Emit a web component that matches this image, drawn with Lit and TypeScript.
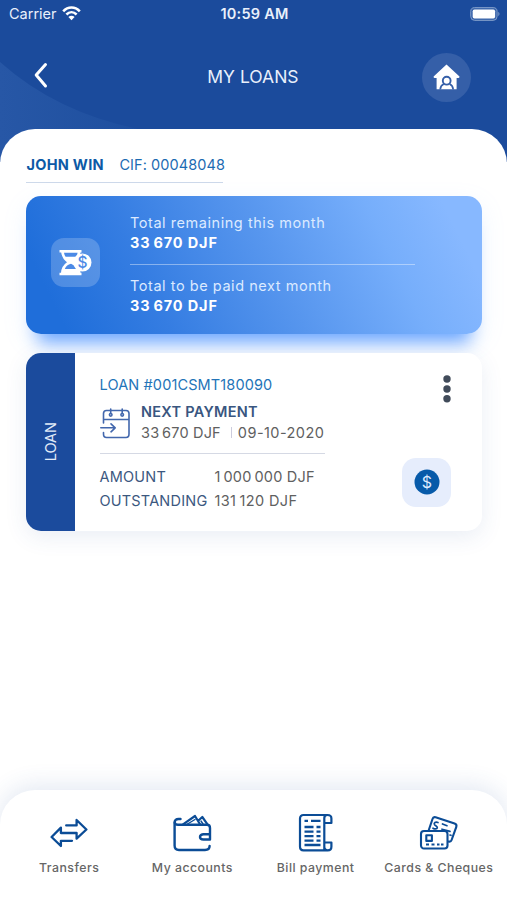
import { LitElement, html, css, svg } from "lit";
import { customElement } from "lit/decorators.js";

const transfersIcon = svg`<svg width="38" height="30" viewBox="0 0 38 30" fill="none" stroke="#0b4c96" stroke-width="2.3" stroke-linecap="round" stroke-linejoin="round">
  <path d="M16.2 7.4H26.6V2L36.4 11.5L26.6 20.6V15H10.9V9.6L1.6 19L10.9 28V22.8H22"/></svg>`;

const walletIcon = svg`<svg width="40" height="40" viewBox="0 0 40 40" fill="none" stroke="#0b4c96" stroke-width="2.4" stroke-linecap="round" stroke-linejoin="round">
  <path d="M8.5 6H6.5C4 6 2.6 7.2 2.6 9.2V32.5C2.6 35.5 4 37 7 37H33C36.3 37 37.6 35.8 37.6 33"/>
  <path d="M2.8 9.5C2.8 11 4 11.8 6 11.8H35C36.8 11.8 38 13 38 15V26.5H31.5C29.5 26.5 28 25.4 28 24C28 22.5 29.5 21.2 31.5 21.2H38"/>
  <path stroke-width="2.2" d="M11 11.3L23 3L28 11.3M26.5 7.5L30.3 4L35.5 11.3"/>
  <path stroke-width="1.4" d="M15.5 11L23 6.5M29 8L31 11"/></svg>`;

const billIcon = svg`<svg width="36" height="40" viewBox="0 0 36 40" fill="none" stroke="#0b4c96" stroke-width="2.2" stroke-linecap="round" stroke-linejoin="round">
  <path d="M29.5 2H5.5C3.2 2 2 3.3 2 5.5V33.5C2 36 3.2 37.4 5.5 37.4H30M26.3 37V5C26.3 3 27.5 2 29.5 2C32 2 33.4 3.2 33.4 5.5V10H26.5M26.5 29.5H33.4V33.8C33.4 36.2 32.2 37.4 29.8 37.4C27.5 37.4 26.3 36 26.3 33.5"/>
  <path stroke-linecap="butt" stroke-width="2.3" d="M6.5 7.8H10M13 7.8H22.5M6.5 14H15.5M18.5 14H22.5M6.5 18.6H15.5M18.5 18.6H22.5M6.5 23.2H15.5M18.5 23.2H22.5M6.5 27.6H15.5M18.5 27.6H22.5M6.5 32H22.5"/></svg>`;

const cardsIcon = svg`<svg width="40" height="36" viewBox="0 0 40 36" fill="none" stroke="#0b4c96" stroke-width="2.1" stroke-linecap="round" stroke-linejoin="round">
  <path d="M9.8 15L13.5 4C14 2.4 15 1.8 16.6 2.3L35.6 8.6C37.2 9.2 37.8 10.3 37.3 11.8L32.6 25C32.1 26.5 31 27 29.4 26.5"/>
  <rect x="2" y="16" width="26.5" height="17.5" rx="3"/>
  <rect x="7.3" y="20.3" width="5.6" height="5.6"/>
  <path stroke-width="1.7" d="M19 7.5C16.5 6.5 14.5 8 15.5 9.6C16.3 10.8 18.6 11 18.3 12.8C18 14.3 15.6 14.2 14 13.2M23.5 9L28 10.7M23 14.2L31 16.4M31 20L32 20.3"/>
  <path d="M7 29.5H10M12.5 29.5H15.5M18 29.5H20.5M22 29.5H24.5" stroke-linecap="butt"/></svg>`;

@customElement("app-root")
export class AppRoot extends LitElement {
  static styles = css`
    :host {
      display: flex;
      flex-direction: column;
      width: 507px;
      height: 900px;
      overflow: hidden;
      background: linear-gradient(#1b4b9c 0 162px, #fff 162px);
      font-family: Inter, "Liberation Sans", sans-serif;
      font-size: 14.5px;
      white-space: nowrap;
    }
    * { box-sizing: border-box; }
    svg { display: block; flex: none; }
    .top { position: relative; height: 129px; flex: none; color: #e9f0fb; }
    .swoosh { position: absolute; left: 0; top: 0; }
    .status { position: relative; display: grid; grid-template-columns: 1fr auto 1fr; align-items: center; height: 27px; padding: 0 7px 0 9px; font-size: 14.5px; }
    .carrier { display: flex; align-items: center; gap: 5px; }
    .carrier svg { margin-top: -1px; }
    .clock { font-weight: 600; letter-spacing: 0.22px; }
    .status .battery { justify-self: end; }
    .bar { position: relative; display: grid; grid-template-columns: 1fr auto 1fr; align-items: center; height: 99px; padding: 0 36.5px 0 33px; }
    .bar > svg { margin-top: -1px; }
    .title { font-size: 17.5px; transform: translateX(1.2px); }
    .home { justify-self: end; display: grid; place-items: center; width: 49px; height: 49px; margin-top: 1px; border-radius: 50%; background: #355fa8; }
    .panel { flex: 1; position: relative; background: #fff; border-radius: 35px 35px 0 0; padding: 24px 25px 0 26px; }
    .owner { display: flex; gap: 15.5px; width: 197px; height: 30px; padding: 3px 0 0 0.5px; line-height: 18px; border-bottom: 1px solid #cdd9ea; color: #1c6bb2; }
    .name { font-weight: 700; color: #0d5aa6; letter-spacing: 0.28px; }
    .cif { letter-spacing: 0.08px; }
    .summary { display: flex; margin-top: 12.5px; height: 138px; border-radius: 15px; background: linear-gradient(64deg, #1f6eda 8%, #357de2 28%, #5796ee 54%, #76aefb 77%, #87b8ff 92%); box-shadow: 0 20px 18px -12px #69a5ff, 0 8px 24px rgba(130, 180, 255, 0.13); color: #dceaff; }
    .tile { display: grid; place-items: center; width: 49px; height: 49px; margin: 42.5px 30.5px 0 24.5px; border-radius: 13px; background: rgba(255, 255, 255, 0.2); }
    .totals { width: 285px; padding-top: 17px; letter-spacing: 0.55px; line-height: 20.7px; }
    .totals b { display: block; color: #fff; font-weight: 700; letter-spacing: 0.85px; }
    .totals hr { margin: 9.8px 0 11px; border: 0; height: 1px; background: rgba(255, 255, 255, 0.4); }
    .loan { position: relative; display: flex; height: 178.5px; margin-top: 19px; border-radius: 15px; background: #fff; box-shadow: 0 6px 22px rgba(50, 90, 160, 0.1); }
    .tab { display: grid; place-items: center; width: 49px; border-radius: 15px 0 0 15px; background: #1b4b9d; color: #e2ebf8; }
    .tab span { writing-mode: vertical-rl; transform: rotate(180deg); }
    .info { width: 225.5px; margin-left: 24.5px; padding-top: 21.5px; color: #606060; line-height: 21px; }
    .number { color: #2374b8; letter-spacing: 0.13px; }
    .next { display: flex; height: 53px; margin-top: 6px; border-bottom: 1px solid #d5d9e4; }
    .next svg { margin-top: 7px; }
    .next div { margin-left: 10.5px; }
    .next b { display: block; font-weight: 600; color: #395680; letter-spacing: 0.28px; }
    .due { display: flex; align-items: center; }
    .paid { letter-spacing: 0.18px; }
    .date { letter-spacing: 0.45px; }
    .due i { width: 1px; height: 11px; margin: 0 6px 0 10px; background: #ccd; }
    .amounts { display: grid; grid-template-columns: 115px auto; row-gap: 3.5px; margin-top: 12.5px; line-height: 20.5px; letter-spacing: 0.2px; }
    .amounts .k { color: #3c587f; }
    .amounts .v { letter-spacing: 0.22px; }
    .amounts .v:last-child { letter-spacing: 0.38px; }
    .actions { flex: 1; display: flex; flex-direction: column; align-items: flex-end; justify-content: space-between; padding: 22px 31px 24.5px 0; }
    .pay { display: grid; place-items: center; width: 49px; height: 49px; border-radius: 14px; background: #e6edfc; }
    nav { position: relative; flex: none; display: flex; height: 110px; border-radius: 35px 35px 0 0; background: #fff; box-shadow: 0 -4px 24px rgba(50, 90, 160, 0.14); padding: 0 7px; }
    .item { width: 123.3px; padding: 23px 0 0 1px; display: flex; flex-direction: column; align-items: center; font-size: 12.3px; font-weight: 500; color: #666; letter-spacing: 0.48px; line-height: 16px; }
    .glyph { display: grid; place-items: center; height: 40px; margin-bottom: 7px; }
  `;

  render() {
    const tabs = [
      ["Transfers", transfersIcon],
      ["My accounts", walletIcon],
      ["Bill payment", billIcon],
      ["Cards & Cheques", cardsIcon],
    ];
    return html`
      <header class="top">
        <svg class="swoosh" width="150" height="162" viewBox="0 0 150 162">
          <defs><linearGradient id="sheen"><stop offset="0" stop-color="#2757a6"/><stop offset="1" stop-color="#1e4f9f"/></linearGradient></defs>
          <path d="M0 62Q56 112 138 129V162H0Z" fill="url(#sheen)"/>
        </svg>
        <div class="status">
          <span class="carrier">Carrier
            <svg width="19" height="15" viewBox="0 0 19 15" fill="none" stroke="#fff" stroke-width="2.6">
              <path d="M1.2 5.3C6 .3 13 .3 17.8 5.3M4.4 8.5C7.5 5.4 11.5 5.4 14.6 8.5"/>
              <path d="M9.5 14.2L6.4 11C8.2 9.3 10.8 9.3 12.6 11Z" fill="#fff" stroke="none"/>
            </svg></span>
          <span class="clock">10:59 AM</span>
          <svg class="battery" width="30" height="14" viewBox="0 0 30 14">
            <rect x=".7" y=".6" width="26.4" height="12.8" rx="4" fill="#3b65ab" stroke="#7f9cc9"/>
            <rect x="2.7" y="2.4" width="22.4" height="9.2" rx="1.8" fill="#fff"/>
            <path d="M28.3 4.8Q30.7 7 28.3 9.2Z" fill="#7f9cc9"/>
          </svg>
        </div>
        <div class="bar">
          <svg width="16" height="28" viewBox="0 0 16 28" fill="none" stroke="#fff" stroke-width="3" stroke-linecap="round" stroke-linejoin="round"><path d="M12.5 2.6L3.2 13L12.5 24"/></svg>
          <span class="title">MY LOANS</span>
          <span class="home"><svg width="27" height="26" viewBox="0 0 27 26">
            <path d="M13.5.5L26.5 12.5Q26.6 14.4 24.5 14H23.6V25.2H3.6V14H2.5Q.4 14.4.6 12.5Z" fill="#fff"/>
            <circle cx="13.7" cy="16.7" r="3.9" fill="#fff" stroke="#355fa8" stroke-width="1.9"/>
            <path d="M7.2 25.5Q7.6 21.6 10.8 20.1M20.2 25.5Q19.8 21.6 16.6 20.1" fill="none" stroke="#355fa8" stroke-width="1.7"/>
          </svg></span>
        </div>
      </header>
      <main class="panel">
        <div class="owner"><span class="name">JOHN WIN</span><span class="cif">CIF: 00048048</span></div>
        <section class="summary">
          <span class="tile"><svg width="33" height="26" viewBox="0 0 33 26">
            <path d="M.5 0H22.5V2.4H21.5Q20.8 8.5 16 12.3Q21 16 21.5 22.8H22.5V25.2H.5V22.8H2Q2.5 16 8 12.3Q3 8.5 2.2 2.4H.5Z" fill="#fff"/>
            <path d="M5 2.8H18.6Q18.2 5 17 6.8H6.6Q5.4 5 5 2.8ZM5.8 18.9Q7.5 14.8 12 13.8Q16 15.2 17.8 18.9Z" fill="#4c8ae6"/>
            <circle cx="23.4" cy="12.5" r="9.1" fill="#fff"/>
            <text x="23.4" y="18" text-anchor="middle" font-size="15.5" font-weight="500" fill="#4c8ae6">$</text>
          </svg></span>
          <div class="totals">
            Total remaining this month<b>33&thinsp;670 DJF</b>
            <hr />
            Total to be paid next month<b>33&thinsp;670 DJF</b>
          </div>
        </section>
        <section class="loan">
          <div class="tab"><span>LOAN</span></div>
          <div class="info">
            <div class="number">LOAN #001CSMT180090</div>
            <div class="next">
              <svg width="31" height="31" viewBox="0 0 31 31" fill="none" stroke="#4267ad" stroke-width="1.6" stroke-linecap="round" stroke-linejoin="round">
                <path d="M3.5 15V5.5Q3.5 2.5 6.5 2.5H26Q29 2.5 29 5.5V26Q29 29.5 26 29.5H6.5Q3.5 29.5 3.5 26V24.5M3.5 11.5H29M10.7 1V5.5M22.2 1V5.5M.8 19.8H15M11 15.8L15.2 19.8L11 23.8"/>
                <circle cx="10.7" cy="6.8" r="1.3"/><circle cx="22.2" cy="6.8" r="1.3"/>
              </svg>
              <div><b>NEXT PAYMENT</b><span class="due"><span class="paid">33&thinsp;670 DJF</span><i></i><span class="date">09-10-2020</span></span></div>
            </div>
            <div class="amounts">
              <span class="k">AMOUNT</span><span class="v">1&thinsp;000&thinsp;000 DJF</span>
              <span class="k">OUTSTANDING</span><span class="v">131&thinsp;120 DJF</span>
            </div>
          </div>
          <div class="actions">
            <svg width="8" height="28" viewBox="0 0 8 28" fill="#414b5a"><circle cx="4" cy="4" r="3.7"/><circle cx="4" cy="14" r="3.7"/><circle cx="4" cy="23.8" r="3.7"/></svg>
            <span class="pay"><svg width="26" height="26" viewBox="0 0 26 26"><circle cx="13" cy="13" r="12.5" fill="#075aa9"/><text x="13" y="18.5" text-anchor="middle" font-size="16" fill="#dceaff">$</text></svg></span>
          </div>
        </section>
      </main>
      <nav>${tabs.map(([label, icon]) => html`<div class="item"><span class="glyph">${icon}</span>${label}</div>`)}</nav>
    `;
  }
}
